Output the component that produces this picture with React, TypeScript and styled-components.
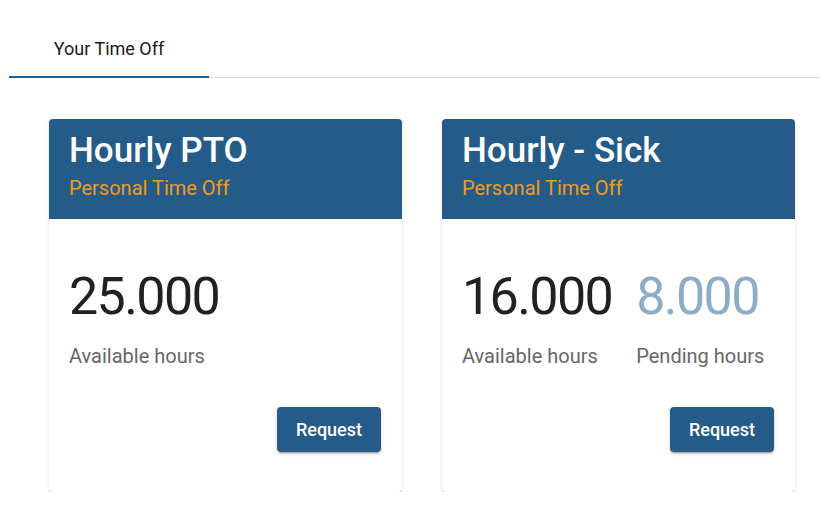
import styled, { createGlobalStyle } from "styled-components";

const GlobalStyle = createGlobalStyle`
  body {
    margin: 0;
    background: #ffffff;
    font-family: Roboto, "Liberation Sans", sans-serif;
  }
`;

interface Stat {
  value: string;
  label: string;
  pending?: boolean;
}

interface Balance {
  title: string;
  subtitle: string;
  stats: Stat[];
}

const balances: Balance[] = [
  {
    title: "Hourly PTO",
    subtitle: "Personal Time Off",
    stats: [{ value: "25.000", label: "Available hours" }],
  },
  {
    title: "Hourly - Sick",
    subtitle: "Personal Time Off",
    stats: [
      { value: "16.000", label: "Available hours" },
      { value: "8.000", label: "Pending hours", pending: true },
    ],
  },
];

const App = () => {
  return (
    <Page>
      <GlobalStyle />
      <TabBar>
        <Tab active>Your Time Off</Tab>
      </TabBar>
      <CardGrid>
        {balances.map((b) => (
          <Card key={b.title}>
            <CardHeader>
              <CardTitle>{b.title}</CardTitle>
              <CardSubtitle>{b.subtitle}</CardSubtitle>
            </CardHeader>
            <CardBody>
              <Stats>
                {b.stats.map((s) => (
                  <StatBlock key={s.label}>
                    <StatValue pending={s.pending}>{s.value}</StatValue>
                    <StatLabel>{s.label}</StatLabel>
                  </StatBlock>
                ))}
              </Stats>
              <Actions>
                <RequestButton>Request</RequestButton>
              </Actions>
            </CardBody>
          </Card>
        ))}
      </CardGrid>
    </Page>
  );
};

export default App;

const Page = styled.div`
  padding: 20px 0 0 9px;
`;

const TabBar = styled.div`
  display: flex;
  border-bottom: 1px solid #e0e0e0;
`;

const Tab = styled.div<{ active?: boolean }>`
  position: relative;
  width: 200px;
  height: 57px;
  display: flex;
  align-items: center;
  justify-content: center;
  padding-bottom: 1px;
  box-sizing: border-box;
  font-size: 18px;
  font-weight: 400;
  color: #1a1a1a;

  &::after {
    content: "";
    position: absolute;
    left: 0;
    right: 0;
    bottom: -1px;
    height: 2px;
    background: ${({ active }) => (active ? "#255b88" : "transparent")};
  }
`;

const CardGrid = styled.div`
  display: flex;
  gap: 40px;
  padding: 41px 0 0 40px;
`;

const Card = styled.div`
  width: 353px;
  border-radius: 4px;
  background: #fff;
  box-shadow: 0 2px 1px -1px rgba(0, 0, 0, 0.2), 0 1px 1px 0 rgba(0, 0, 0, 0.14),
    0 1px 3px 0 rgba(0, 0, 0, 0.12);
  overflow: hidden;
`;

const CardHeader = styled.div`
  background: #255b88;
  padding: 10px 20px 18px;
  height: 100px;
  box-sizing: border-box;
`;

const CardTitle = styled.div`
  font-size: 35px;
  font-weight: 500;
  line-height: 43px;
  color: #ffffff;
`;

const CardSubtitle = styled.div`
  margin-top: 4px;
  font-size: 20px;
  line-height: 24px;
  color: #f39c1a;
`;

const CardBody = styled.div`
  padding: 45px 21px 40px 20px;
`;

const Stats = styled.div`
  display: flex;
  gap: 24px;
`;

const StatBlock = styled.div`
  display: flex;
  flex-direction: column;
`;

const StatValue = styled.div<{ pending?: boolean }>`
  font-size: 52px;
  line-height: 65px;
  letter-spacing: -1.6px;
  color: ${({ pending }) => (pending ? "#8facc6" : "#212121")};
`;

const StatLabel = styled.div`
  margin-top: 15px;
  font-size: 20px;
  line-height: 24px;
  color: #666666;
`;

const Actions = styled.div`
  display: flex;
  justify-content: flex-end;
  margin-top: 39px;
`;

const RequestButton = styled.button`
  height: 45px;
  padding: 0 19px;
  border: none;
  border-radius: 4px;
  background: #255b88;
  color: #ffffff;
  font-family: Roboto, "Liberation Sans", sans-serif;
  font-size: 18px;
  font-weight: 500;
  box-shadow: 0 3px 1px -2px rgba(0, 0, 0, 0.2), 0 2px 2px 0 rgba(0, 0, 0, 0.14),
    0 1px 5px 0 rgba(0, 0, 0, 0.12);
  cursor: pointer;
`;
